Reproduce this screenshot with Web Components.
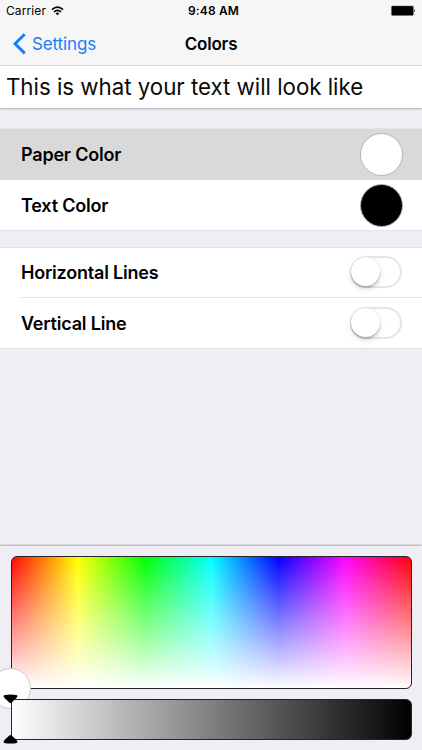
<!DOCTYPE html>
<html lang="en">
<head>
<meta charset="utf-8">
<title>Colors</title>
<style>
html,body{margin:0;height:100%;overflow:hidden;background:#efeef4}
</style>
</head>
<body>
<colors-screen></colors-screen>
<script>
const define = (name, html) => customElements.define(name, class extends HTMLElement {
  constructor() {
    super();
    const t = document.createElement('template');
    t.innerHTML = html;
    this.attachShadow({mode: 'open'}).append(t.content.cloneNode(true));
  }
});

define('status-bar', `
<style>
:host{display:grid;grid-template-columns:1fr auto 1fr;align-items:center;height:21px;padding:0 6px 0 6px;font-size:12px}
.left{display:flex;align-items:center;gap:5px}
.carrier{letter-spacing:.1px}
.time{font-weight:600;letter-spacing:.12px;padding-left:5px}
.battery{justify-self:end}
svg{display:block}
</style>
<div class="left"><span class="carrier">Carrier</span>
<svg width="13" height="10" viewBox="0 0 14 10" fill="none" stroke="#000" stroke-width="1.7"><path d="M1 3.6Q7-1.8 13 3.6M3.2 6Q7 2.6 10.8 6"/><path d="M4.9 7.5Q7 5.8 9.1 7.5L7 9.7Z" fill="#000" stroke="none"/></svg></div>
<span class="time">9:48 AM</span>
<svg class="battery" width="25" height="11.5" viewBox="0 0 25 11.5"><rect x=".4" y=".9" width="22" height="9.6" rx="1.2" fill="#000" stroke="#777" stroke-width=".5"/><path d="M23.2 4q1.7 1.8 0 3.6z"/></svg>
`);

define('nav-bar', `
<style>
:host{display:grid;grid-template-columns:1fr auto 1fr;align-items:center;box-sizing:border-box;height:44px;padding-top:1px;font-size:17px}
.back{display:flex;align-items:center;gap:6px;padding-left:13px;color:#157efb;letter-spacing:-.12px}
.title{font-weight:600;letter-spacing:-.2px}
svg{display:block}
</style>
<div class="back"><svg width="13" height="22" viewBox="0 0 13 22" fill="none" stroke="currentColor" stroke-width="3"><path d="M11.7 1.2 2.1 10.8 11.7 20.4"/></svg><slot name="back"></slot></div>
<div class="title"><slot></slot></div>
`);

define('text-preview', `
<style>
:host{display:flex;align-items:center;box-sizing:border-box;height:42px;padding:0 6px 1px;background:#fff;font-size:22.3px;color:#0b0b0b;letter-spacing:-.02px;white-space:nowrap;box-shadow:0 1px 2px #aaaab0}
</style><slot></slot>
`);

define('settings-group', `
<style>
:host{display:block;background:#fff;border-top:1px solid #e4e3e9;border-bottom:1px solid #e4e3e9}
</style><slot></slot>
`);

define('settings-row', `
<style>
:host{display:flex;justify-content:space-between;align-items:center;box-sizing:border-box;height:50px;padding:0 20.5px 0 21px;font-size:18px;font-weight:600}
:host([selected]){height:51px;background:#d9d9d9}
:host([divided]){padding-bottom:2px;background:linear-gradient(#e5e4e7,#e5e4e7) 20px 100%/100% 1px no-repeat}
.label{letter-spacing:-.2px}
</style><span class="label"><slot></slot></span><slot name="control"></slot>
`);

define('color-swatch', `
<style>
:host{display:block;box-sizing:border-box;width:43px;height:43px;border:1.5px solid #b5b5b5;border-radius:50%;background:var(--swatch,#fff);margin-right:-1px}
</style>
`);

define('toggle-switch', `
<style>
:host{display:block;box-sizing:border-box;width:51.5px;height:32px;border:2px solid #e5e5e6;border-radius:16px}
.thumb{width:29px;height:29px;margin:-1px 0 0 -1px;border-radius:50%;background:#fff;box-shadow:0 2px 2px #0003,0 3px 7px #0000001c,0 0 1px #0002}
</style><div class="thumb"></div>
`);

define('color-field', `
<style>
:host{display:block;position:relative;box-sizing:border-box;height:133px;border:1.4px solid #25232b;border-radius:6px;background:linear-gradient(#fff0,#fff),linear-gradient(90deg,#f00,#ff0,#0f0,#0ff,#00f,#f0f,#f00);background-origin:border-box}
.thumb{position:absolute;box-sizing:border-box;width:41px;height:41px;left:-22px;bottom:-21px;border:1.5px solid #cbcbd0;border-radius:50%;background:#fff}
</style><div class="thumb"></div>
`);

define('brightness-slider', `
<style>
:host{display:block;position:relative;box-sizing:border-box;height:41px;border:1.4px solid #25232b;border-radius:0 6px 6px 0;background:linear-gradient(90deg,#fff,#000);background-origin:border-box}
svg{position:absolute;left:-8.4px;display:block}
.top{top:-5.9px}.bottom{bottom:-4.8px;transform:scaleY(-1)}
</style>
<svg class="top" width="15" height="10" viewBox="0 0 15 10"><path d="M.5 2Q.5.5 7.5.5T14.5 2Q14.5 3.5 11 6.2L8.7 8.6Q7.5 9.6 6.3 8.6L4 6.2Q.5 3.5.5 2Z"/></svg>
<svg class="bottom" width="15" height="10" viewBox="0 0 15 10"><path d="M.5 2Q.5.5 7.5.5T14.5 2Q14.5 3.5 11 6.2L8.7 8.6Q7.5 9.6 6.3 8.6L4 6.2Q.5 3.5.5 2Z"/></svg>
`);

define('picker-panel', `
<style>
:host{display:flex;flex-direction:column;gap:10px;box-sizing:border-box;height:204px;padding:10px 10.5px 0;background:#efeef4;box-shadow:0 -1px 2px #aaaab0}
</style><slot></slot>
`);

define('colors-screen', `
<style>
:host{display:flex;flex-direction:column;width:422px;height:750px;overflow:hidden;background:#efeef4;color:#000;font-family:Inter,"Liberation Sans",sans-serif}
header{background:#f6f6f7;border-bottom:1px solid #dcdcde}
main{display:flex;flex-direction:column;gap:16px;padding-top:20px;flex:1}
</style>
<header><status-bar></status-bar><nav-bar><span slot="back">Settings</span>Colors</nav-bar></header>
<text-preview>This is what your text will look like</text-preview>
<main>
<settings-group>
<settings-row selected>Paper Color<color-swatch slot="control"></color-swatch></settings-row>
<settings-row>Text Color<color-swatch slot="control" style="--swatch:#000"></color-swatch></settings-row>
</settings-group>
<settings-group>
<settings-row divided>Horizontal Lines<toggle-switch slot="control"></toggle-switch></settings-row>
<settings-row>Vertical Line<toggle-switch slot="control"></toggle-switch></settings-row>
</settings-group>
</main>
<picker-panel><color-field></color-field><brightness-slider></brightness-slider></picker-panel>
`);
</script>
</body>
</html>
